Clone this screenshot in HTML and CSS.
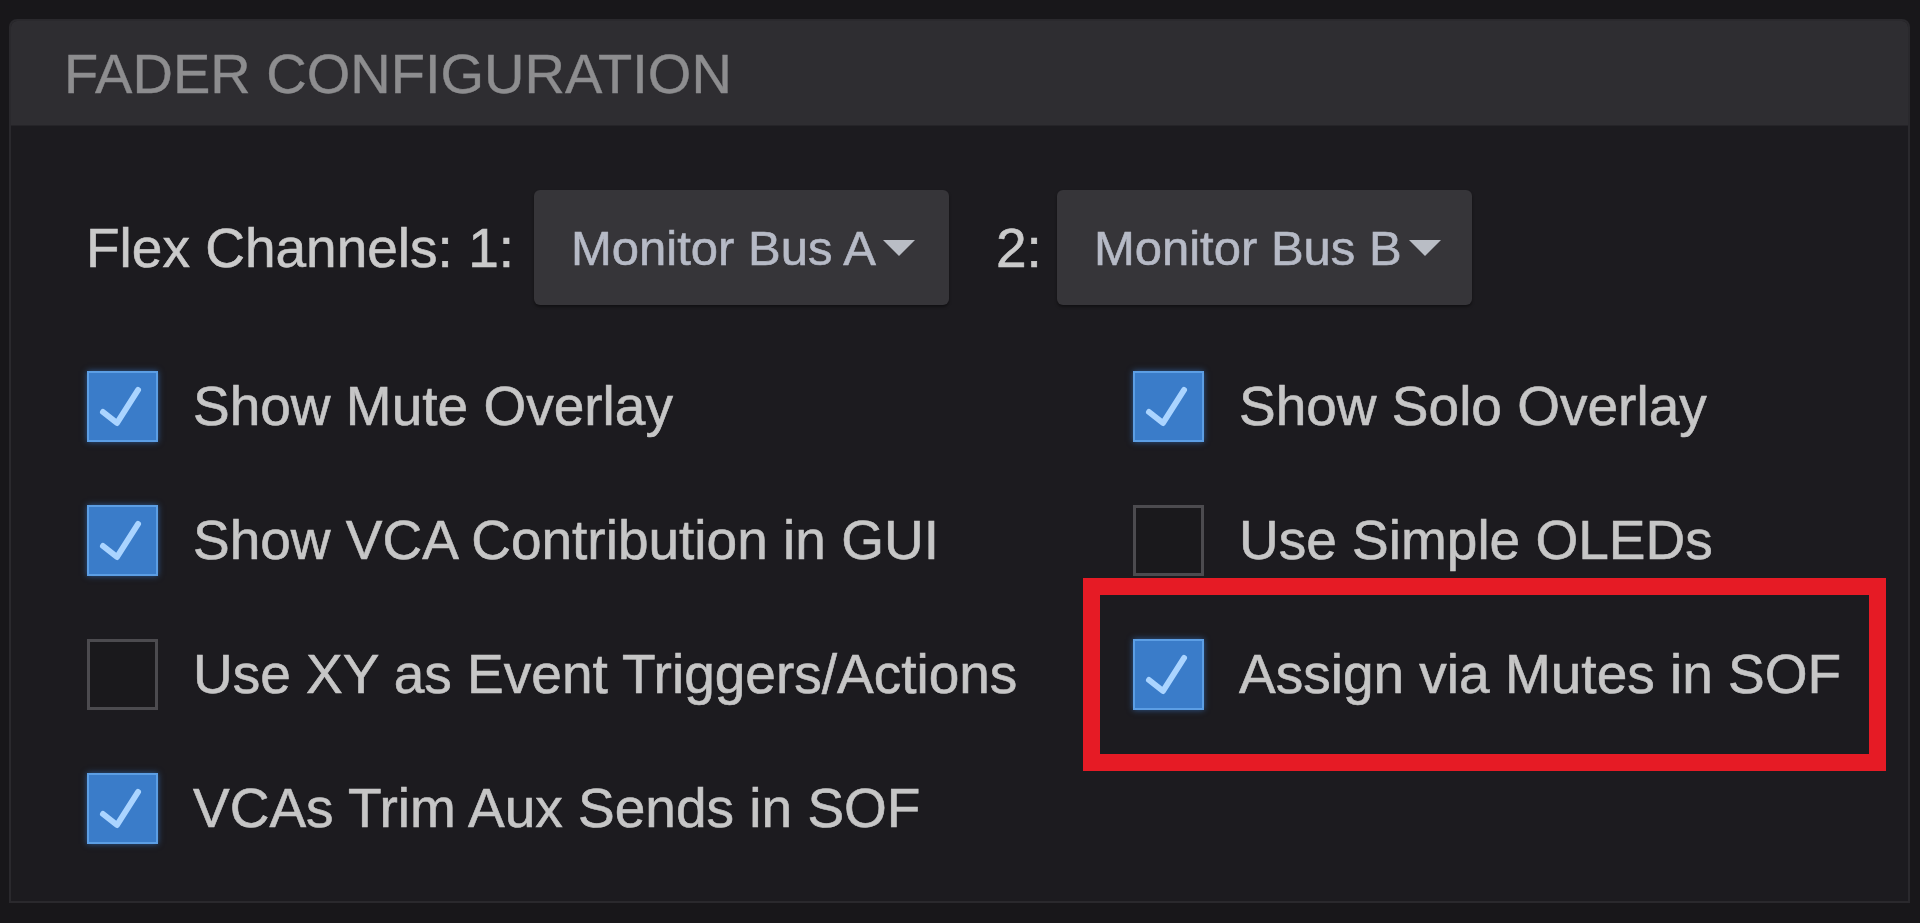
FILE: index.html
```html
<!DOCTYPE html>
<html lang="en">
<head>
    <meta charset="UTF-8">
    <meta name="viewport" content="width=device-width, initial-scale=1.0">
    <title>Fader Configuration</title>
    <link rel="stylesheet" href="styles.css">
</head>
<body>
    <div class="panel">
        <div class="panel-head">FADER CONFIGURATION</div>
        <div class="panel-body">
            <div class="flex-row">
                <span class="flex-label">Flex Channels: 1:</span>
                <div class="dropdown">Monitor Bus A<span class="caret"></span></div>
                <span class="flex-label second">2:</span>
                <div class="dropdown">Monitor Bus B<span class="caret"></span></div>
            </div>

            <div class="options">
                <label class="option">
                    <span class="box checked"><svg viewBox="0 0 67 67"><polyline points="14,39 28,50 49,17"/></svg></span>
                    <span class="text">Show Mute Overlay</span>
                </label>
                <label class="option">
                    <span class="box checked"><svg viewBox="0 0 67 67"><polyline points="14,39 28,50 49,17"/></svg></span>
                    <span class="text">Show Solo Overlay</span>
                </label>
                <label class="option">
                    <span class="box checked"><svg viewBox="0 0 67 67"><polyline points="14,39 28,50 49,17"/></svg></span>
                    <span class="text">Show VCA Contribution in GUI</span>
                </label>
                <label class="option">
                    <span class="box"></span>
                    <span class="text">Use Simple OLEDs</span>
                </label>
                <label class="option">
                    <span class="box"></span>
                    <span class="text">Use XY as Event Triggers/Actions</span>
                </label>
                <label class="option highlight">
                    <span class="box checked"><svg viewBox="0 0 67 67"><polyline points="14,39 28,50 49,17"/></svg></span>
                    <span class="text">Assign via Mutes in SOF</span>
                </label>
                <label class="option">
                    <span class="box checked"><svg viewBox="0 0 67 67"><polyline points="14,39 28,50 49,17"/></svg></span>
                    <span class="text">VCAs Trim Aux Sends in SOF</span>
                </label>
            </div>
        </div>
    </div>
</body>
</html>
```

FILE: styles.css
```css
body {
    font-family: 'Liberation Sans', Arial, sans-serif;
    background-color: #18171a;
    margin: 0;
    padding: 19px 10px 20px 9px;
    color: #c6c6c6;
}

.panel {
    height: 884px;
    box-sizing: border-box;
    background: #1c1b1f;
    border: 2px solid #2a292d;
    border-radius: 8px 8px 0 0;
    overflow: hidden;
}

.panel-head {
    height: 104px;
    display: flex;
    align-items: center;
    padding-left: 53px;
    background: #2e2d31;
    border-bottom: 1px solid #252428;
    font-size: 56px;
    color: #8d8d8f;
    -webkit-text-stroke: 0.4px #8d8d8f;
}

.panel-body {
    padding: 64px 0 0 75px;
}

.flex-row {
    display: flex;
    align-items: center;
    height: 115px;
}

.flex-label {
    font-size: 55px;
    color: #cacaca;
    -webkit-text-stroke: 0.6px #cacaca;
    margin-right: 20px;
}

.flex-label.second {
    margin-left: 47px;
    margin-right: 15px;
}

.dropdown {
    width: 415px;
    height: 115px;
    box-sizing: border-box;
    display: flex;
    align-items: center;
    padding-left: 37px;
    background: #363539;
    border-radius: 6px;
    box-shadow: 0 2px 3px rgba(0, 0, 0, 0.4);
    font-size: 49px;
    color: #b6bac6;
    -webkit-text-stroke: 0.6px #b6bac6;
}

.caret {
    width: 0;
    height: 0;
    margin-left: 7px;
    border-left: 16px solid transparent;
    border-right: 16px solid transparent;
    border-top: 16px solid #b9bdc5;
}

.options {
    display: grid;
    grid-template-columns: 1046px 1fr;
    grid-auto-rows: 134px;
    margin-top: 34px;
    padding-left: 1px;
}

.option {
    position: relative;
    display: flex;
    align-items: center;
    gap: 35px;
}

.box {
    width: 71px;
    height: 71px;
    box-sizing: border-box;
    flex-shrink: 0;
    border: 3px solid #4c4b4f;
    background: #1a191c;
}

.box.checked {
    border: 2px solid #5c9ee4;
    background: #3a7cc9;
    box-shadow: 0 0 6px rgba(60, 130, 220, 0.6);
}

.box svg {
    display: block;
    width: 100%;
    height: 100%;
}

.box polyline {
    fill: none;
    stroke: #aad4ff;
    stroke-width: 6;
    stroke-linecap: round;
    stroke-linejoin: round;
}

.text {
    font-size: 55px;
    color: #c6c6c6;
    -webkit-text-stroke: 0.6px #c6c6c6;
    white-space: nowrap;
}

.highlight::after {
    content: '';
    position: absolute;
    left: -50px;
    top: -29px;
    width: 803px;
    height: 193px;
    box-sizing: border-box;
    border: 17px solid #e61b25;
}
```
